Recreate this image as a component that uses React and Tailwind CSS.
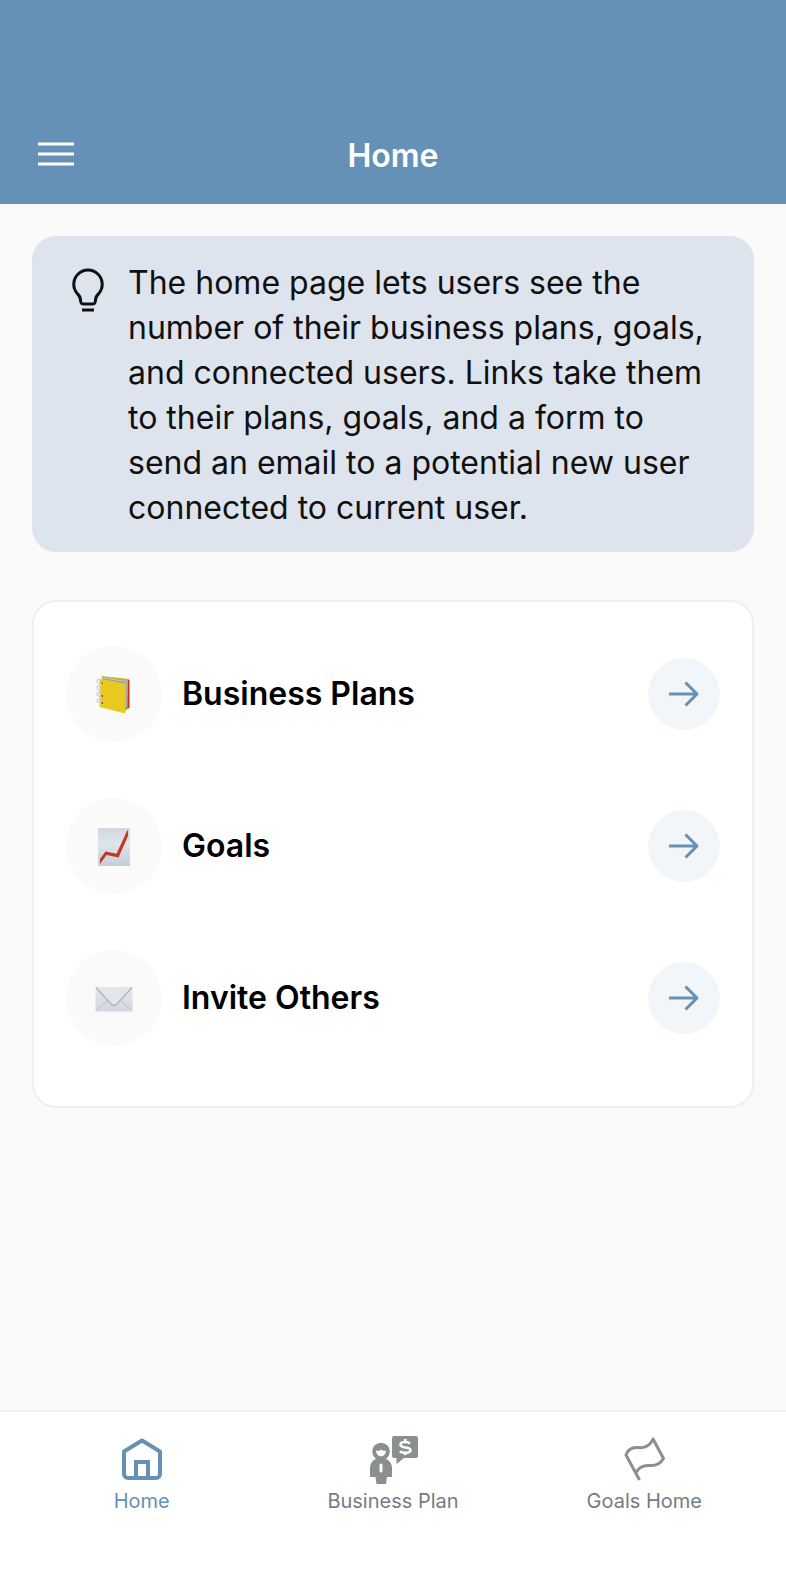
const links = [
  { label: 'Business Plans', Icon: NotebookIcon },
  { label: 'Goals', Icon: ChartIcon },
  { label: 'Invite Others', Icon: EnvelopeIcon },
];

const tabs = [
  { label: 'Home', Icon: HomeIcon, active: true },
  { label: 'Business Plan', Icon: AdvisorIcon },
  { label: 'Goals Home', Icon: FlagIcon },
];

function MenuIcon() {
  return (
    <svg className="h-12 w-12" viewBox="0 0 48 48" fill="none" stroke="currentColor" strokeWidth="3">
      <path d="M6 12h36M6 22h36M6 32h36" />
    </svg>
  );
}

function BulbIcon() {
  return (
    <svg className="h-12 w-12 shrink-0" viewBox="0 0 48 48" fill="none" stroke="currentColor" strokeWidth="3">
      <path d="M16.500 32c0-3-1-4.300-3.200-6.400A14.200 14.200 0 1 1 34.700 25.600c-2.200 2.100-3.200 3.400-3.200 6.400 0 3.200-1 4-3.500 4h-8c-2.500 0-3.500-.8-3.500-4Z" />
      <path d="M18 42h12" />
    </svg>
  );
}

function ArrowIcon() {
  return (
    <svg className="h-10 w-10" viewBox="0 0 40 40" fill="none" stroke="currentColor" strokeWidth="3">
      <path d="M5 20h28M21.500 8.500L33 20 21.500 31.500" strokeLinejoin="round" />
    </svg>
  );
}

function NotebookIcon() {
  return (
    <svg className="h-10 w-10" viewBox="0 0 40 40">
      <path d="M7 2l28 3v29l-4 3z" fill="#c9b41c" />
      <path d="M34 6h1.500v28l-2 .5z" fill="#c8321f" />
      <path d="M8 3.500l25 3.500v27l-3 5z" fill="#9a9da3" />
      <path d="M10 4l22 3.500v25" fill="none" stroke="#c4c7cc" strokeWidth="1" />
      <path d="M5.500 4.500l25.500 5v30L5.500 33z" fill="#e8c91f" />
      <g fill="none" stroke="#cfd2d5" strokeWidth="1.400">
        <path d="M7.500 9c-1 1-4.500 0-4.500-1.800S5.500 4.500 7 5.500" />
        <path d="M7.500 15.500c-1 1-4.500 0-4.500-1.800S5.500 11 7 12" />
        <path d="M7.500 22c-1 1-4.500 0-4.500-1.800s2.500-2.700 4-1.700" />
        <path d="M7.500 28.500c-1 1-4.500 0-4.500-1.800s2.500-2.700 4-1.700" />
      </g>
      <path d="M7.500 8.500h1.500v1.500H7.500zM7.500 21h1.500v2H7.500zM7.500 28h1.500v2H7.500z" fill="#b5482a" />
    </svg>
  );
}

function ChartIcon() {
  return (
    <svg className="h-10 w-10" viewBox="0 0 40 40">
      <defs>
        <linearGradient id="chart-paper" x1="0" y1="0" x2="0" y2="1">
          <stop offset="0" stopColor="#d0d7dc" />
          <stop offset="0.400" stopColor="#dee5ee" />
          <stop offset="1" stopColor="#c5ced7" />
        </linearGradient>
      </defs>
      <path d="M4 2h32v38H4z" fill="url(#chart-paper)" />
      <path d="M6 38v-5L11.500 25.500l11 2.200L33 5l1-1v6L24.500 31.500 12.500 29z" fill="#c3371f" />
    </svg>
  );
}

function EnvelopeIcon() {
  return (
    <svg className="h-10 w-10" viewBox="0 0 40 40">
      <defs>
        <linearGradient id="envelope-paper" x1="0" y1="0" x2="0" y2="1">
          <stop offset="0" stopColor="#e6e7e8" />
          <stop offset="1" stopColor="#d1d8e1" />
        </linearGradient>
      </defs>
      <path d="M1.500 9h37v24.500h-37z" fill="url(#envelope-paper)" />
      <path d="M2.500 32l12-10M37.500 32l-12-10" stroke="#b6c2d0" strokeWidth="1" />
      <path d="M2 9.500L17 26q3 3 6 0L38 9.500" fill="#e4e5e7" stroke="#aab6c3" strokeWidth="1.300" />
    </svg>
  );
}

function HomeIcon() {
  return (
    <svg className="h-12 w-12" viewBox="0 0 48 48" fill="none" stroke="currentColor" strokeWidth="4">
      <path d="M24 4.500L42 15.500V38a4 4 0 0 1-4 4H10a4 4 0 0 1-4-4V15.500z" strokeLinejoin="round" />
      <path d="M18 42V26h12v16" />
    </svg>
  );
}

function AdvisorIcon() {
  return (
    <svg className="h-12 w-12 overflow-visible" viewBox="-1 0 48 48">
      <path
        d="M24 0h22a2 2 0 0 1 2 2v17.500A2.500 2.500 0 0 1 45.500 22H34l-7.500 6v-6H24a2 2 0 0 1-2-2V2a2 2 0 0 1 2-2z"
        fill="currentColor"
      />
      <path
        d="M40 7.500c-1-1-2.500-1.500-5-1.500s-4.500.9-4.500 2.700c0 4 10 1.500 10 5.300 0 1.900-2 2.800-5 2.800-2.500 0-4.500-.5-5.500-1.600M35.300 3v3M35.300 16v3"
        fill="none"
        stroke="#fff"
        strokeWidth="2.600"
      />
      <circle cx="11" cy="15.500" r="8.800" fill="currentColor" />
      <path d="M6 14.500c2.500.8 4 0 5-1 1.500 1.300 3 1.500 5 1-.2 3.500-2.200 5.800-5 5.800s-4.800-2.500-5-5.800z" fill="#fff" />
      <path d="M5.500 23h11C20 25 22 28 22 32v9h-5l-1 7H6.500l-1-7H0v-9c0-4 2-7 5.500-9z" fill="currentColor" />
      <rect x="9.500" y="27.500" width="3" height="9" rx="1.500" fill="#fff" />
    </svg>
  );
}

function FlagIcon() {
  return (
    <svg className="h-12 w-12" viewBox="0 0 48 48" fill="none" stroke="currentColor" strokeWidth="3">
      <path d="M19.500 44L6 19c2-6 6-8 12-7.500 7 .8 12-1.500 15-8.500l10.500 19.500c-3.500 6-8 7.500-14 7-6.500-.5-10.500 1.500-13.500 7" strokeLinejoin="round" />
    </svg>
  );
}

export default function App() {
  return (
    <div className="flex min-h-screen flex-col bg-[#fafafa] font-['Inter',sans-serif] text-[#101010] [font-optical-sizing:none]">
      <header className="grid grid-cols-[48px_1fr_48px] items-center bg-[#6591b6] px-8 pt-[132px] pb-6 text-white">
        <button type="button" aria-label="Open menu">
          <MenuIcon />
        </button>
        <h1 className="text-center text-[32px] leading-10 font-semibold">Home</h1>
      </header>

      <main className="flex flex-1 flex-col gap-12 p-8">
        <section className="flex gap-4 rounded-3xl bg-[#dde4ed] px-8 pt-6 pb-[22px]">
          <div className="pt-2">
            <BulbIcon />
          </div>
          <p className="text-[32px] leading-[45px]">
            The home page lets users see the number of their business plans, goals, and connected users. Links take
            them to their plans, goals, and a form to send an email to a potential new user connected to current user.
          </p>
        </section>

        <ul className="rounded-3xl border-2 border-[#efefef] bg-white px-8 pt-4 pb-8">
          {links.map(({ label, Icon }) => (
            <li key={label}>
              <a href="#" className="flex items-center gap-5 py-7">
                <span className="flex h-24 w-24 items-center justify-center rounded-full bg-[#fafafa]">
                  <Icon />
                </span>
                <span className="flex-1 text-[32px] leading-10 font-semibold text-black">{label}</span>
                <span className="flex h-[72px] w-[72px] items-center justify-center rounded-full bg-[#f2f6f9] text-[#6591b6]">
                  <ArrowIcon />
                </span>
              </a>
            </li>
          ))}
        </ul>
      </main>

      <nav className="grid grid-cols-3 border-t-2 border-[#efefef] bg-white px-4 pt-6 pb-[78px]">
        {tabs.map(({ label, Icon, active }) => (
          <a
            key={label}
            href="#"
            className={`flex flex-col items-center gap-1 ${active ? 'text-[#6591b6]' : 'text-[#8b8f90]'}`}
          >
            <Icon />
            <span className={`text-xl leading-[26px] ${active ? '' : 'text-[#777c82]'}`}>{label}</span>
          </a>
        ))}
      </nav>
    </div>
  );
}
